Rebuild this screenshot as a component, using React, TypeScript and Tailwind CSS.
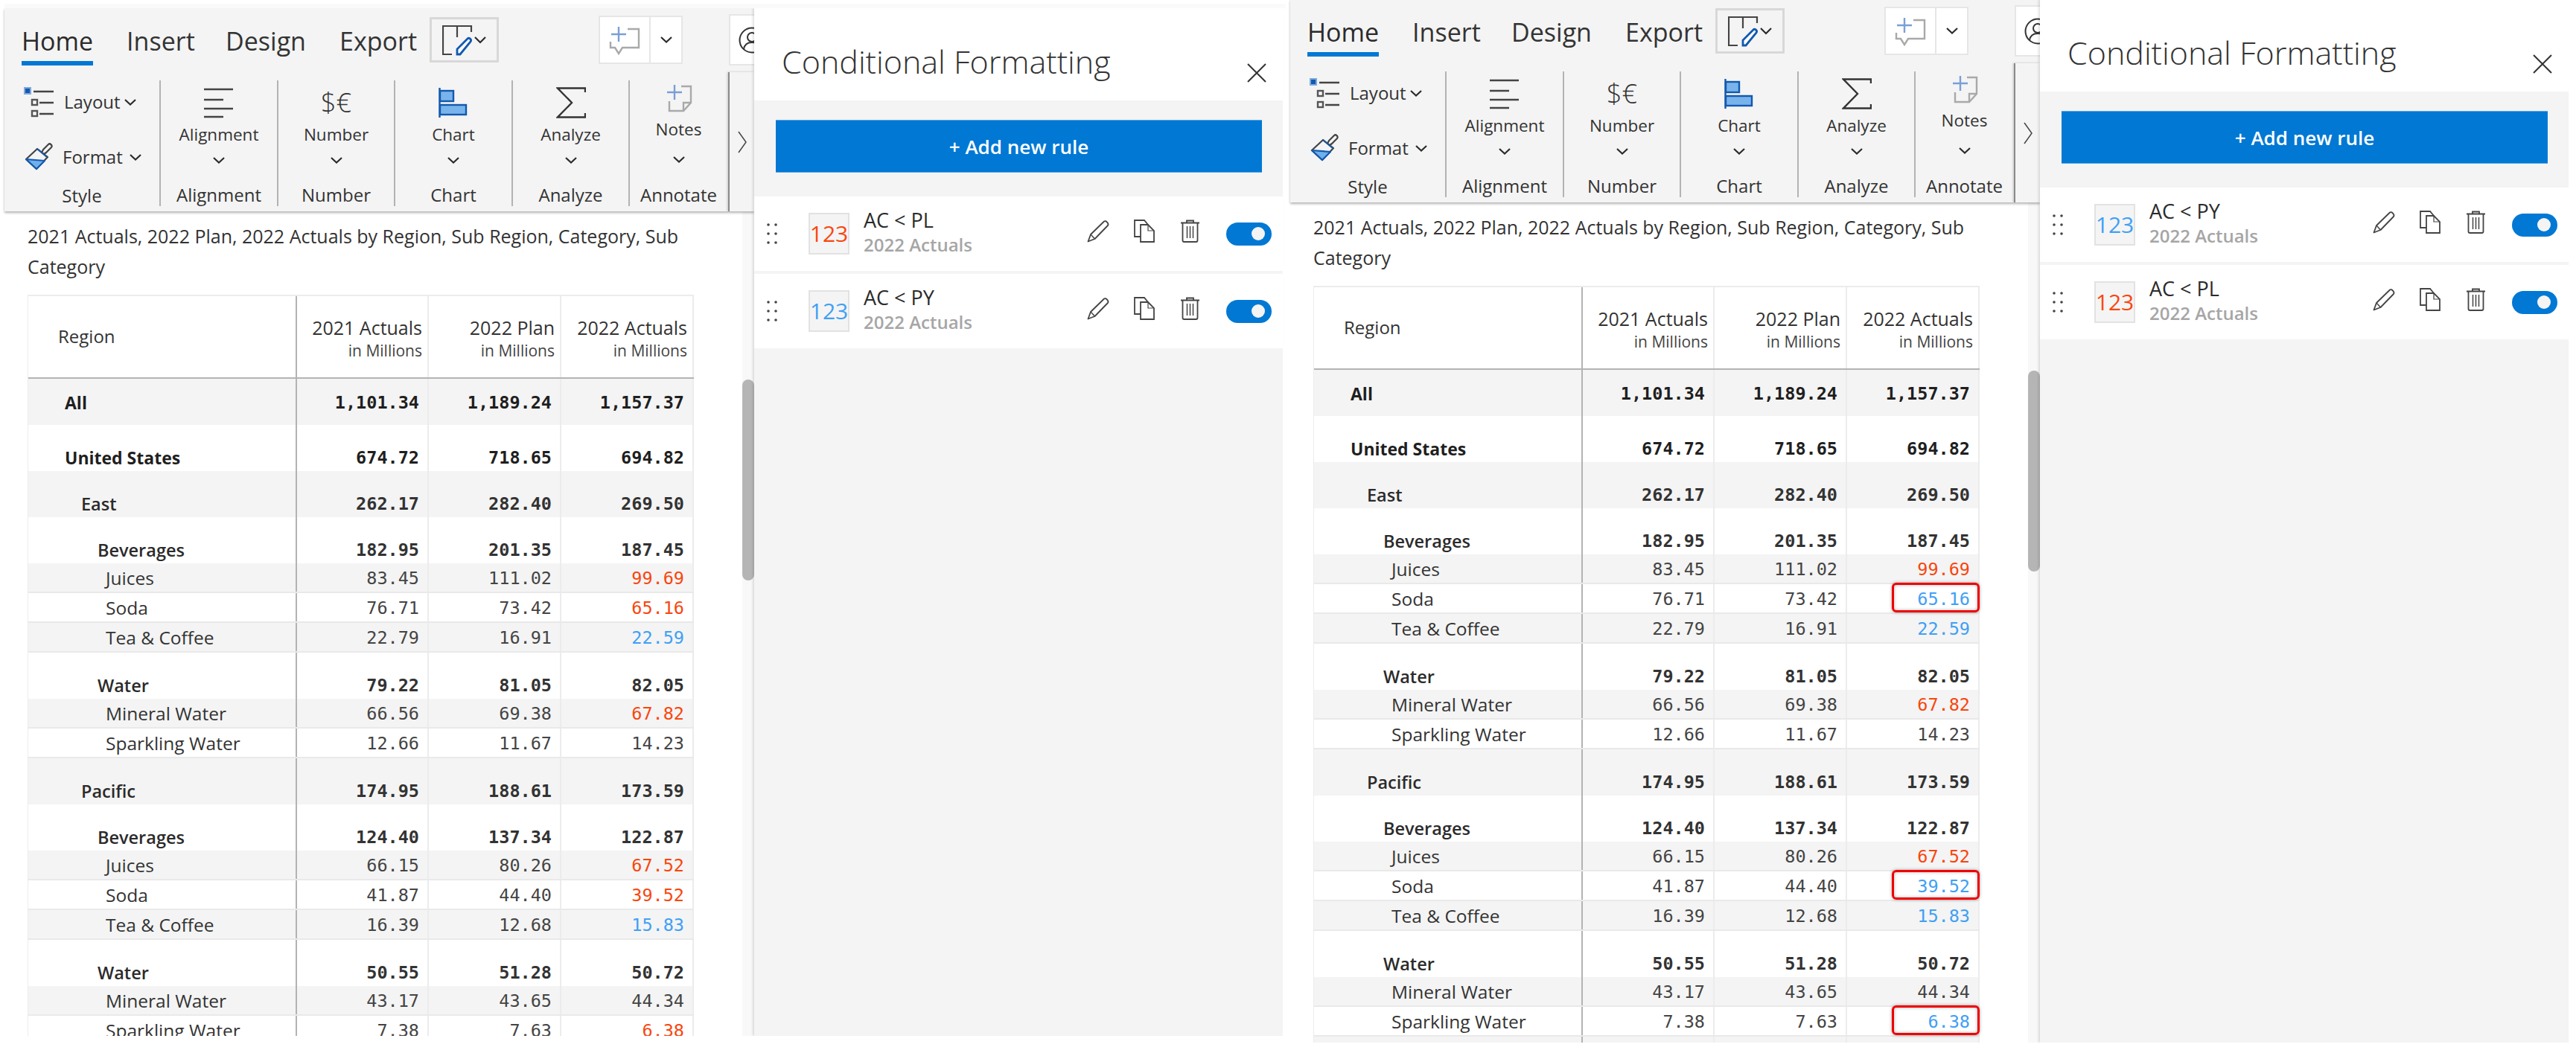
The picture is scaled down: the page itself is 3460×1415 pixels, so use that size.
const UI = "font-['Open_Sans',sans-serif]"

type Kind = 'all' | 'top' | 'mid' | 'leaf'
type Tone = 'red' | 'blue' | 'none'

interface Row {
  name: string
  indent: string
  kind: Kind
  a: string
  b: string
  c: string
  tone?: Tone
  boxed?: boolean
}

const MID_RED = 'text-[#f9460e]'
const MID_BLUE = 'text-[#3fa0f5]'

function buildRows(variant: 'left' | 'right'): Row[] {
  const flip = variant === 'right'
  const pick = (): Tone => (flip ? 'blue' : 'red')
  return [
    { name: 'All', indent: 'pl-[49px]', kind: 'all', a: '1,101.34', b: '1,189.24', c: '1,157.37' },
    { name: 'United States', indent: 'pl-[49px]', kind: 'top', a: '674.72', b: '718.65', c: '694.82' },
    { name: 'East', indent: 'pl-[71px]', kind: 'mid', a: '262.17', b: '282.40', c: '269.50' },
    { name: 'Beverages', indent: 'pl-[93px]', kind: 'mid', a: '182.95', b: '201.35', c: '187.45' },
    { name: 'Juices', indent: 'pl-[104px]', kind: 'leaf', a: '83.45', b: '111.02', c: '99.69', tone: 'red' },
    { name: 'Soda', indent: 'pl-[104px]', kind: 'leaf', a: '76.71', b: '73.42', c: '65.16', tone: pick(), boxed: flip },
    { name: 'Tea & Coffee', indent: 'pl-[104px]', kind: 'leaf', a: '22.79', b: '16.91', c: '22.59', tone: 'blue' },
    { name: 'Water', indent: 'pl-[93px]', kind: 'mid', a: '79.22', b: '81.05', c: '82.05' },
    { name: 'Mineral Water', indent: 'pl-[104px]', kind: 'leaf', a: '66.56', b: '69.38', c: '67.82', tone: 'red' },
    { name: 'Sparkling Water', indent: 'pl-[104px]', kind: 'leaf', a: '12.66', b: '11.67', c: '14.23' },
    { name: 'Pacific', indent: 'pl-[71px]', kind: 'mid', a: '174.95', b: '188.61', c: '173.59' },
    { name: 'Beverages', indent: 'pl-[93px]', kind: 'mid', a: '124.40', b: '137.34', c: '122.87' },
    { name: 'Juices', indent: 'pl-[104px]', kind: 'leaf', a: '66.15', b: '80.26', c: '67.52', tone: 'red' },
    { name: 'Soda', indent: 'pl-[104px]', kind: 'leaf', a: '41.87', b: '44.40', c: '39.52', tone: pick(), boxed: flip },
    { name: 'Tea & Coffee', indent: 'pl-[104px]', kind: 'leaf', a: '16.39', b: '12.68', c: '15.83', tone: 'blue' },
    { name: 'Water', indent: 'pl-[93px]', kind: 'mid', a: '50.55', b: '51.28', c: '50.72' },
    { name: 'Mineral Water', indent: 'pl-[104px]', kind: 'leaf', a: '43.17', b: '43.65', c: '44.34' },
    { name: 'Sparkling Water', indent: 'pl-[104px]', kind: 'leaf', a: '7.38', b: '7.63', c: '6.38', tone: pick(), boxed: flip },
    { name: '', indent: 'pl-[71px]', kind: 'mid', a: '', b: '', c: '' },
  ]
}

function Chevron({ className = '' }: { className?: string }) {
  return (
    <svg width="16" height="9" viewBox="0 0 16 9" fill="none" className={className}>
      <path d="M1 1l7 6.5L15 1" stroke="#2b2b2b" strokeWidth="2.2" />
    </svg>
  )
}

function LayoutIcon() {
  return (
    <svg width="42" height="42" viewBox="0 0 42 42" fill="none">
      <rect x="2" y="2" width="8" height="8" fill="#1259ae" stroke="#7da9dc" strokeWidth="2" />
      <path d="M14 7h27M22 22h19M22 37h19" stroke="#444" strokeWidth="2.4" />
      <rect x="12" y="18" width="7" height="7" stroke="#555" strokeWidth="2.4" />
      <rect x="12" y="33" width="7" height="7" stroke="#555" strokeWidth="2.4" />
    </svg>
  )
}

function BrushIcon() {
  return (
    <svg width="40" height="40" viewBox="0 0 40 40" fill="none">
      <path d="M2 23L17 9l14 11-15 16z" stroke="#444" strokeWidth="2.2" strokeLinejoin="round" />
      <path d="M2 23l25 2-11 11z" fill="#6fb0ec" stroke="#1259ae" strokeWidth="2.2" strokeLinejoin="round" />
      <path d="M17 9l13 11" stroke="#1259ae" strokeWidth="2.2" />
      <path d="M23 14l2-4 7-7c2-2 6 1 4 4l-7 7-3 2" stroke="#444" strokeWidth="2.2" strokeLinejoin="round" />
    </svg>
  )
}

function AlignIcon() {
  return (
    <svg width="40" height="42" viewBox="0 0 40 42" fill="none">
      <path d="M0 3h39M0 17h26M0 29h39M0 40h26" stroke="#444" strokeWidth="2.4" />
    </svg>
  )
}

function ChartIcon() {
  return (
    <svg width="40" height="42" viewBox="0 0 40 42" fill="none">
      <path d="M1.5 1v40" stroke="#1259ae" strokeWidth="2.4" />
      <rect x="2" y="5" width="18" height="14" fill="#78b3eb" stroke="#1259ae" strokeWidth="2.4" />
      <rect x="2" y="24" width="35" height="13" fill="#78b3eb" stroke="#1259ae" strokeWidth="2.4" />
    </svg>
  )
}

function SigmaIcon() {
  return (
    <svg width="40" height="42" viewBox="0 0 40 42" fill="none">
      <path d="M39 7V1.500H2L21 21 2 40.500h37V35" stroke="#333" strokeWidth="2.4" />
    </svg>
  )
}

function NotesIcon() {
  return (
    <svg width="36" height="38" viewBox="0 0 36 38" fill="none">
      <path d="M2 11h20M12 1v20" stroke="#7a9fd6" strokeWidth="2.4" />
      <path d="M21 3h13v22L24 36H5V23M24 36V25h10" stroke="#a9a9a9" strokeWidth="2.4" />
    </svg>
  )
}

function ReportIcon() {
  return (
    <svg width="60" height="42" viewBox="0 0 60 42" fill="none">
      <path d="M13 40H1V2h38v8M20 2v15" stroke="#444" strokeWidth="2.2" />
      <path d="M20 40v-7L34 19c2-2 6 1 4 4L24 40z" fill="#fff" stroke="#1259ae" strokeWidth="2.8" />
      <path d="M44 17l7 7 7-7" stroke="#2b2b2b" strokeWidth="2.2" />
    </svg>
  )
}

function CommentIcon() {
  return (
    <svg width="42" height="40" viewBox="0 0 42 40" fill="none">
      <path d="M3 12h20M13 2v20" stroke="#7a9fd6" strokeWidth="2.4" />
      <path d="M25 5h15v25H18l-5 8-5-8H2v-8" stroke="#a9a9a9" strokeWidth="2.4" />
    </svg>
  )
}

function PencilIcon() {
  return (
    <svg width="31" height="31" viewBox="0 0 31 31" fill="none">
      <path d="M1.500 29.500L5 20 23 2.500c2-2 7 3 5 5.500L10.500 26z" stroke="#444" strokeWidth="1.8" strokeLinejoin="round" />
      <path d="M5 20l5.500 6" stroke="#444" strokeWidth="1.500" />
    </svg>
  )
}

function CopyIcon() {
  return (
    <svg width="28" height="31" viewBox="0 0 28 31" fill="none">
      <path d="M9 23H1V1h13l5 6" stroke="#444" strokeWidth="1.8" />
      <path d="M9 7h10l8 8v15H9z" stroke="#444" strokeWidth="1.8" />
      <path d="M19 7v8h8" stroke="#444" strokeWidth="1.200" />
    </svg>
  )
}

function TrashIcon() {
  return (
    <svg width="25" height="31" viewBox="0 0 25 31" fill="none">
      <path d="M0 4.500h25M8 4V1.500h9V4" stroke="#444" strokeWidth="1.8" />
      <path d="M2.500 5v23c0 1 1 2 2 2h16c1 0 2-1 2-2V5" stroke="#444" strokeWidth="1.8" />
      <path d="M8.500 9v16M12.500 9v16M16.500 9v16" stroke="#444" strokeWidth="1.500" />
    </svg>
  )
}

function DragDots() {
  return (
    <svg width="14" height="28" viewBox="0 0 14 28" fill="#444">
      <circle cx="2" cy="2" r="1.800" />
      <circle cx="12" cy="2" r="1.800" />
      <circle cx="2" cy="14" r="1.800" />
      <circle cx="12" cy="14" r="1.800" />
      <circle cx="2" cy="26" r="1.800" />
      <circle cx="12" cy="26" r="1.800" />
    </svg>
  )
}

function RibbonGroup({
  icon,
  label,
  caption,
  width,
  notes,
  last,
}: {
  icon: React.ReactNode
  label: string
  caption: string
  width: string
  notes?: boolean
  last?: boolean
}) {
  return (
    <div className={`${width} flex h-[169px] shrink-0 flex-col items-center ${last ? '' : 'border-r-2 border-[#b3b3b3]'}`}>
      <div className={`${notes ? 'h-[48px]' : 'h-[60px]'} flex items-center justify-center`}>{icon}</div>
      <div className={`${notes ? 'h-[36px]' : 'h-[26px]'} flex items-center text-[22.500px] leading-none text-[#333]`}>{label}</div>
      <div className={`${notes ? 'h-[44px]' : 'h-[42px]'} flex items-center`}>
        <Chevron />
      </div>
      <div className="whitespace-nowrap pt-[11px] text-[24px] font-medium leading-[30px] text-[#333]">{caption}</div>
    </div>
  )
}

function Ribbon() {
  const tab = 'mt-[22px] whitespace-nowrap text-[34px] leading-[44px] text-[#333]'
  return (
    <div className="relative z-10 h-[273px] w-[1007px] overflow-hidden bg-[#f4f4f4] shadow-[0_2px_3px_rgba(0,0,0,0.3)]">
      <div className="flex h-[86px] items-start">
        <div className="ml-[23px] mt-[22px] w-[97px] whitespace-nowrap border-b-[6px] border-[#0078d4] pb-[5px] text-[34px] font-medium leading-[44px] text-[#2b2b2b]">
          Home
        </div>
        <div className={`${tab} ml-[45px] w-[87px]`}>Insert</div>
        <div className={`${tab} ml-[46px] w-[106px]`}>Design</div>
        <div className={`${tab} ml-[47px] w-[98px]`}>Export</div>
        <div className="ml-[23px] mt-[12px] flex h-[61px] w-[93px] shrink-0 items-center justify-center border-[3px] border-[#d8d8d8]">
          <ReportIcon />
        </div>
        <div className="ml-[134px] mt-[10px] flex h-[65px] w-[113px] shrink-0 items-stretch border-2 border-[#e6e6e6] bg-white">
          <div className="flex w-[68px] items-center justify-center border-r-2 border-[#e6e6e6]">
            <CommentIcon />
          </div>
          <div className="flex flex-1 items-center justify-center">
            <Chevron />
          </div>
        </div>
        <div className="ml-[62px] mt-[8px] flex h-[69px] w-[60px] shrink-0 items-center border-2 border-[#e6e6e6] bg-white pl-[11px]">
          <svg width="36" height="36" viewBox="0 0 36 36" fill="none" className="shrink-0">
            <circle cx="18" cy="18" r="16.500" stroke="#333" strokeWidth="2" />
            <circle cx="18" cy="14" r="6" stroke="#333" strokeWidth="2" />
            <path d="M7 30c1-6 5-9 11-9s10 3 11 9" stroke="#333" strokeWidth="2" />
          </svg>
        </div>
      </div>
      <div className="flex items-start">
        <div className="flex w-[972px] pt-[11px]">
          <div className="flex h-[169px] w-[210px] shrink-0 flex-col border-r-2 border-[#b3b3b3]">
            <div className="ml-[25px] mt-[8px] flex h-[42px] items-center">
              <LayoutIcon />
              <span className="ml-[13px] text-[24px] leading-none text-[#333]">Layout</span>
              <Chevron className="ml-[5px]" />
            </div>
            <div className="ml-[27px] mt-[33px] flex h-[40px] items-center">
              <BrushIcon />
              <span className="ml-[11px] text-[24px] leading-none text-[#333]">Format</span>
              <Chevron className="ml-[9px]" />
            </div>
            <div className="mt-[17px] text-center text-[24px] font-medium leading-[30px] text-[#333]">Style</div>
          </div>
          <RibbonGroup width="w-[158px]" icon={<AlignIcon />} label="Alignment" caption="Alignment" />
          <RibbonGroup
            width="w-[157px]"
            icon={<span className="text-[36px] font-light leading-none text-[#333]">$€</span>}
            label="Number"
            caption="Number"
          />
          <RibbonGroup width="w-[158px]" icon={<ChartIcon />} label="Chart" caption="Chart" />
          <RibbonGroup width="w-[157px]" icon={<SigmaIcon />} label="Analyze" caption="Analyze" />
          <RibbonGroup width="w-[131px]" icon={<NotesIcon />} label="Notes" caption="Annotate" notes last />
        </div>
        <div className="flex h-[187px] w-[35px] items-center justify-center border-l-2 border-[#8a8a8a] shadow-[-1px_0_3px_rgba(0,0,0,0.2)]">
          <svg width="14" height="30" viewBox="0 0 14 30" fill="none">
            <path d="M2 1l10 14L2 29" stroke="#444" strokeWidth="1.500" />
          </svg>
        </div>
      </div>
    </div>
  )
}

function ValueCell({
  value,
  width,
  numClass,
  tone,
  boxed,
}: {
  value: string
  width: string
  numClass: string
  tone?: Tone
  boxed?: boolean
}) {
  // tone overrides the row's own number colour
  const color = tone === 'red' ? MID_RED : tone === 'blue' ? MID_BLUE : numClass
  return (
    <div className={`${width} relative flex h-full shrink-0 justify-end border-r-2 border-[#ececec] pr-[11px]`}>
      <span className={`${color} font-['DejaVu_Sans_Mono',monospace] text-[23.500px] leading-[30px]`}>{value}</span>
      {boxed && (
        <div className="absolute bottom-0 left-[60px] right-[-2px] top-[-2px] rounded-[6px] border-[3px] border-[#f00000] shadow-[0_0_4px_rgba(0,0,0,0.35),inset_0_0_4px_rgba(0,0,0,0.3)]" />
      )}
    </div>
  )
}

function DataTable({ rows }: { rows: Row[] }) {
  return (
    <div className="ml-[31px] mt-[17px] w-[895px] border-l border-[#ececec]">
      <div className="flex h-[113px] border-y-2 border-t-[#ececec] border-b-[#b3b3b3]">
        <div className="flex w-[361px] shrink-0 items-center border-r-2 border-[#b3b3b3] pb-[2px] pl-[40px] text-[24px] text-[#333]">
          Region
        </div>
        {['2021 Actuals', '2022 Plan', '2022 Actuals'].map((h, i) => (
          <div
            key={h}
            className={`${i === 0 ? 'w-[177px]' : 'w-[178px]'} flex shrink-0 flex-col items-end border-r-2 border-[#ececec] pr-[7px] pt-[25px]`}
          >
            <span className="whitespace-nowrap text-[25px] leading-[34px] text-[#333]">{h}</span>
            <span className="whitespace-nowrap text-[21px] leading-[28px] text-[#444]">in Millions</span>
          </div>
        ))}
      </div>
      {rows.map((r, idx) => {
        const stripe = idx % 2 === 0 ? 'bg-[#f4f4f4]' : 'bg-white'
        const height = r.kind === 'leaf' ? 'h-[40px] border-b-2 border-[#e9e9e9]' : 'h-[62px]'
        const nameClass =
          r.kind === 'all' || r.kind === 'top'
            ? 'text-[23px] font-bold text-[#1f1f1f]'
            : r.kind === 'mid'
              ? 'text-[23.500px] font-semibold text-[#2b2b2b]'
              : 'text-[24.500px] text-[#333]'
        const numClass =
          r.kind === 'all' || r.kind === 'top'
            ? 'font-bold text-[#1f1f1f]'
            : r.kind === 'mid'
              ? 'font-bold text-[#333]'
              : 'text-[#444]'
        const align =
          r.kind === 'all' || r.kind === 'leaf'
            ? 'items-center [&>*]:items-center [&>*]:pt-[2px]'
            : 'items-end [&>*]:items-end [&>*]:pb-[3px]'
        return (
          <div key={idx} className={`${stripe} ${height} ${align} flex`}>
            <div
              className={`${r.indent} ${nameClass} flex h-full w-[361px] shrink-0 whitespace-nowrap border-r-2 border-[#b3b3b3] leading-[30px]`}
            >
              {r.name}
            </div>
            <ValueCell value={r.a} width="w-[177px]" numClass={numClass} />
            <ValueCell value={r.b} width="w-[178px]" numClass={numClass} />
            <ValueCell value={r.c} width="w-[178px]" numClass={numClass} tone={r.tone} boxed={r.boxed} />
          </div>
        )
      })}
    </div>
  )
}

function RuleRow({ color, title }: { color: string; title: string }) {
  return (
    <div className="flex h-[100px] items-center bg-white pl-[17px] pr-[15px]">
      <DragDots />
      <div className="ml-[42px] flex h-[56px] w-[55px] items-center justify-center border-2 border-[#e2e2e2] bg-[#f4f4f4]">
        <span className={`${color} text-[30px] leading-none`}>123</span>
      </div>
      <div className="mb-[5px] ml-[19px] flex flex-col">
        <span className="whitespace-pre text-[27px] leading-[34px] text-[#2b2b2b]">{title}</span>
        <span className="text-[24px] font-semibold leading-[32px] text-[#a6a6a6]">2022 Actuals</span>
      </div>
      <div className="ml-auto flex items-center">
        <div className="mb-[7px] flex items-center">
          <PencilIcon />
          <div className="ml-[32px]">
            <CopyIcon />
          </div>
          <div className="ml-[35px]">
            <TrashIcon />
          </div>
        </div>
        <div className="ml-[36px] flex h-[31px] w-[61px] items-center justify-end rounded-full bg-[#0078d4] pr-[9px]">
          <div className="h-[18px] w-[18px] rounded-full bg-[#f4f4f4]" />
        </div>
      </div>
    </div>
  )
}

function FormatPanel({ rules }: { rules: { color: string; title: string }[] }) {
  return (
    <div className="relative z-20 flex w-[710px] shrink-0 flex-col bg-[#f4f4f4] shadow-[-2px_0_3px_rgba(0,0,0,0.12)]">
      <div className="flex h-[124px] items-start justify-between bg-white pl-[37px] pr-[22px]">
        <span className="mt-[38px] text-[43px] font-light leading-[68px] text-[#333]">Conditional Formatting</span>
        <svg width="26" height="26" viewBox="0 0 26 26" fill="none" className="mt-[74px]">
          <path d="M1 1l24 24M25 1L1 25" stroke="#333" strokeWidth="2" />
        </svg>
      </div>
      <button className="ml-[29px] mt-[26px] flex h-[71px] w-[653px] items-center justify-center border-y border-[#5aa6e2] bg-[#0078d4] pt-[2px] text-[26px] font-semibold text-white">
        + Add new rule
      </button>
      <div className="mt-[32px] flex flex-col gap-[4px]">
        {rules.map((r) => (
          <RuleRow key={r.title} color={r.color} title={r.title} />
        ))}
      </div>
    </div>
  )
}

function ReportPane({
  variant,
  height,
  rules,
}: {
  variant: 'left' | 'right'
  height: string
  rules: { color: string; title: string }[]
}) {
  return (
    <div className={`${height} flex w-[1727px] shrink-0 overflow-hidden pl-[6px]`}>
      <div className="flex w-[1007px] shrink-0 flex-col">
        <Ribbon />
        <div className="flex min-h-0 flex-1">
          <div className="w-[991px] shrink-0 overflow-hidden">
            <p className="mt-[13px] pl-[31px] text-[25px] leading-[41px] text-[#333]">
              2021 Actuals, 2022 Plan, 2022 Actuals by Region, Sub Region, Category, Sub
              <br />
              Category
            </p>
            <DataTable rows={buildRows(variant)} />
          </div>
          <div className="w-[16px] shrink-0 bg-[#f8f8f8] pt-[226px]">
            <div className="h-[270px] rounded-full bg-[#b5b5b5]" />
          </div>
        </div>
      </div>
      <FormatPanel rules={rules} />
    </div>
  )
}

export default function App() {
  const red = { color: MID_RED, title: 'AC < PL' }
  const blue = { color: MID_BLUE, title: 'AC < PY' }
  return (
    <div className={`${UI} flex h-[1415px] w-[3460px] items-start overflow-hidden bg-white`}>
      <div className="mt-[5px] w-[1727px] shrink-0">
        <div className="ml-[6px] h-[6px] bg-[#fafafa]" />
        <ReportPane variant="left" height="h-[1381px]" rules={[red, blue]} />
      </div>
      <div className="mt-[-1px] w-[1727px] shrink-0">
        <ReportPane variant="right" height="h-[1402px]" rules={[blue, red]} />
      </div>
    </div>
  )
}
